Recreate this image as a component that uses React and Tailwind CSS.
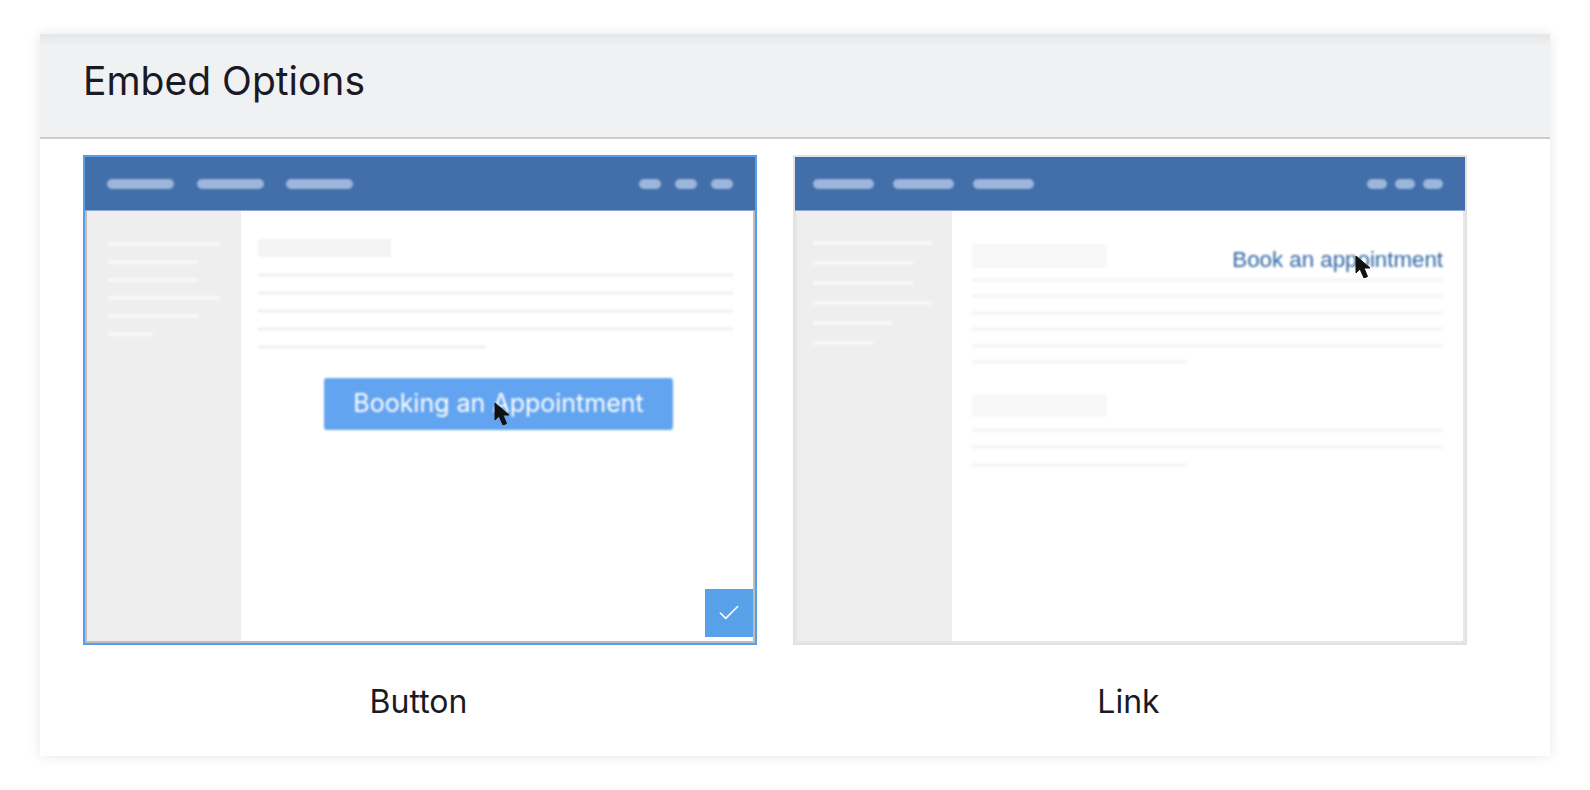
import { Check } from 'lucide-react';

function Cursor({ className }) {
  return (
    <svg viewBox="0 0 16 22" className={className}>
      <path d="M1 0 L1 17 L5 13 L9 22 L12.5 20.5 L9 12 L15 12 Z" fill="#111" stroke="#111" strokeWidth="1" strokeLinejoin="round" />
    </svg>
  );
}

function NavBar({ gap, smallGap, smallWidth, pillWidth, pad }) {
  return (
    <div className={`h-[54px] shrink-0 bg-[#426ea9] border-b border-[#8aa8d0] flex items-center justify-between ${pad}`}>
      <div className={`flex blur-[0.8px] ${gap}`}>
        {[1, 2, 3].map((p) => <div key={p} className={`h-[10px] rounded-full bg-[#9cb6dc] ${pillWidth}`} />)}
      </div>
      <div className={`flex blur-[0.8px] ${smallGap}`}>
        {[1, 2, 3].map((p) => <div key={p} className={`h-[10px] rounded-full bg-[#9cb6dc] ${smallWidth}`} />)}
      </div>
    </div>
  );
}

function ButtonThumb() {
  const side = ['w-[112px]', 'w-[90px]', 'w-[90px]', 'w-[112px]', 'w-[90px]', 'w-[45px]'];
  const lines = ['w-full', 'w-full', 'w-full', 'w-full', 'w-[228px]'];
  return (
    <div className="relative w-[674px] h-[490px] border-2 border-[#559fe6] overflow-hidden flex flex-col">
      <NavBar
        gap="gap-[22.5px]"
        smallGap="gap-[14px]"
        pillWidth="w-[67px]"
        smallWidth="w-[22px]"
        pad="pl-[22px] pr-[22px]"
      />
      <div className="flex-1 flex border-x-2 border-b-2 border-[#bdbdbd]">
        <div className="w-[154px] bg-[#eeeeee] pl-[21px] pt-[31px]">
          <div className="flex flex-col gap-[14px] blur-[0.8px]">
            {side.map((w, i) => <div key={i} className={`h-[4px] bg-[#f8f8f8] ${w}`} />)}
          </div>
        </div>
        <div className="flex-1 bg-white pl-[17px] pr-[20px] pt-[28px]">
          <div className="blur-[0.8px]">
            <div className="w-[133px] h-[18px] rounded-[2px] bg-[#f3f3f3]" />
            <div className="mt-[16px] flex flex-col gap-[14px]">
              {lines.map((w, i) => <div key={i} className={`h-[4px] bg-[#f3f3f3] ${w}`} />)}
            </div>
            <div className="mt-[29px] ml-[66px] w-[349px] h-[52px] rounded-[3px] bg-[#63a4f0] flex items-center justify-center text-white text-[25px] font-['Inter',sans-serif]">
              Booking an Appointment
            </div>
          </div>
        </div>
      </div>
      <Cursor className="absolute left-[409px] top-[246px] w-[16px] h-[22px]" />
      <div className="absolute right-[2px] bottom-[6px] w-[48px] h-[48px] bg-[#58a0e8] flex items-center justify-center">
        <Check className="w-[26px] h-[26px] text-white" strokeWidth={1.5} />
      </div>
    </div>
  );
}

function LinkThumb() {
  const side = ['w-[119px]', 'w-[100px]', 'w-[100px]', 'w-[119px]', 'w-[80px]', 'w-[60px]'];
  const first = ['w-full', 'w-full', 'w-full', 'w-full', 'w-full', 'w-[215px]'];
  const second = ['w-full', 'w-full', 'w-[215px]'];
  return (
    <div className="relative w-[674px] h-[490px] border-2 border-[#e2e2e2] overflow-hidden flex flex-col">
      <NavBar
        gap="gap-[19px]"
        smallGap="gap-[8px]"
        pillWidth="w-[61px]"
        smallWidth="w-[20px]"
        pad="pl-[18px] pr-[22px]"
      />
      <div className="flex-1 flex border-x-2 border-b-2 border-[#e6e6e6]">
        <div className="w-[155px] bg-[#eeeeee] pl-[16px] pt-[30px]">
          <div className="flex flex-col gap-[16px] blur-[0.8px]">
            {side.map((w, i) => <div key={i} className={`h-[4px] bg-[#f8f8f8] ${w}`} />)}
          </div>
        </div>
        <div className="flex-1 bg-white pl-[20px] pr-[20px] pt-[33px]">
          <div className="blur-[0.8px]">
            <div className="flex justify-between">
              <div className="w-[135px] h-[24px] bg-[#f8f8f8]" />
              <a className="mt-[1px] text-[22.3px] leading-[30px] text-[#2f66a5] font-['Liberation_Sans',sans-serif]">Book an appointment</a>
            </div>
            <div className="mt-[3px] flex flex-col gap-[12.4px]">
              {first.map((w, i) => <div key={i} className={`h-[4px] bg-[#f6f6f6] ${w}`} />)}
            </div>
            <div className="mt-[30px] w-[135px] h-[23px] bg-[#f8f8f8]" />
            <div className="mt-[11px] flex flex-col gap-[13.5px]">
              {second.map((w, i) => <div key={i} className={`h-[4px] bg-[#f6f6f6] ${w}`} />)}
            </div>
          </div>
        </div>
      </div>
      <Cursor className="absolute left-[560px] top-[99px] w-[16px] h-[22px]" />
    </div>
  );
}

export default function App() {
  return (
    <div className="w-[1590px] h-[790px] bg-white pt-[34px] px-[40px] font-['Inter',sans-serif]">
      <div className="w-[1510px] h-[722px] bg-white shadow-[0_0_12px_rgba(0,0,0,0.1)]">
        <div className="h-[105px] bg-[linear-gradient(#e5e6e8,#f0f1f3_12px)] border-b-2 border-[#cccccc] pl-[43px] pb-[9px] flex items-center">
          <h1 className="text-[39px] text-[#1a1a24]">Embed Options</h1>
        </div>
        <div className="pl-[43px] pt-[16px] flex gap-[36px]">
          <div className="flex flex-col items-center">
            <ButtonThumb />
            <p className="mt-[39px] pr-[3px] text-[32px] leading-[36px] text-[#1a1a24]">Button</p>
          </div>
          <div className="flex flex-col items-center">
            <LinkThumb />
            <p className="mt-[39px] pr-[3px] text-[32px] leading-[36px] text-[#1a1a24]">Link</p>
          </div>
        </div>
      </div>
    </div>
  );
}
